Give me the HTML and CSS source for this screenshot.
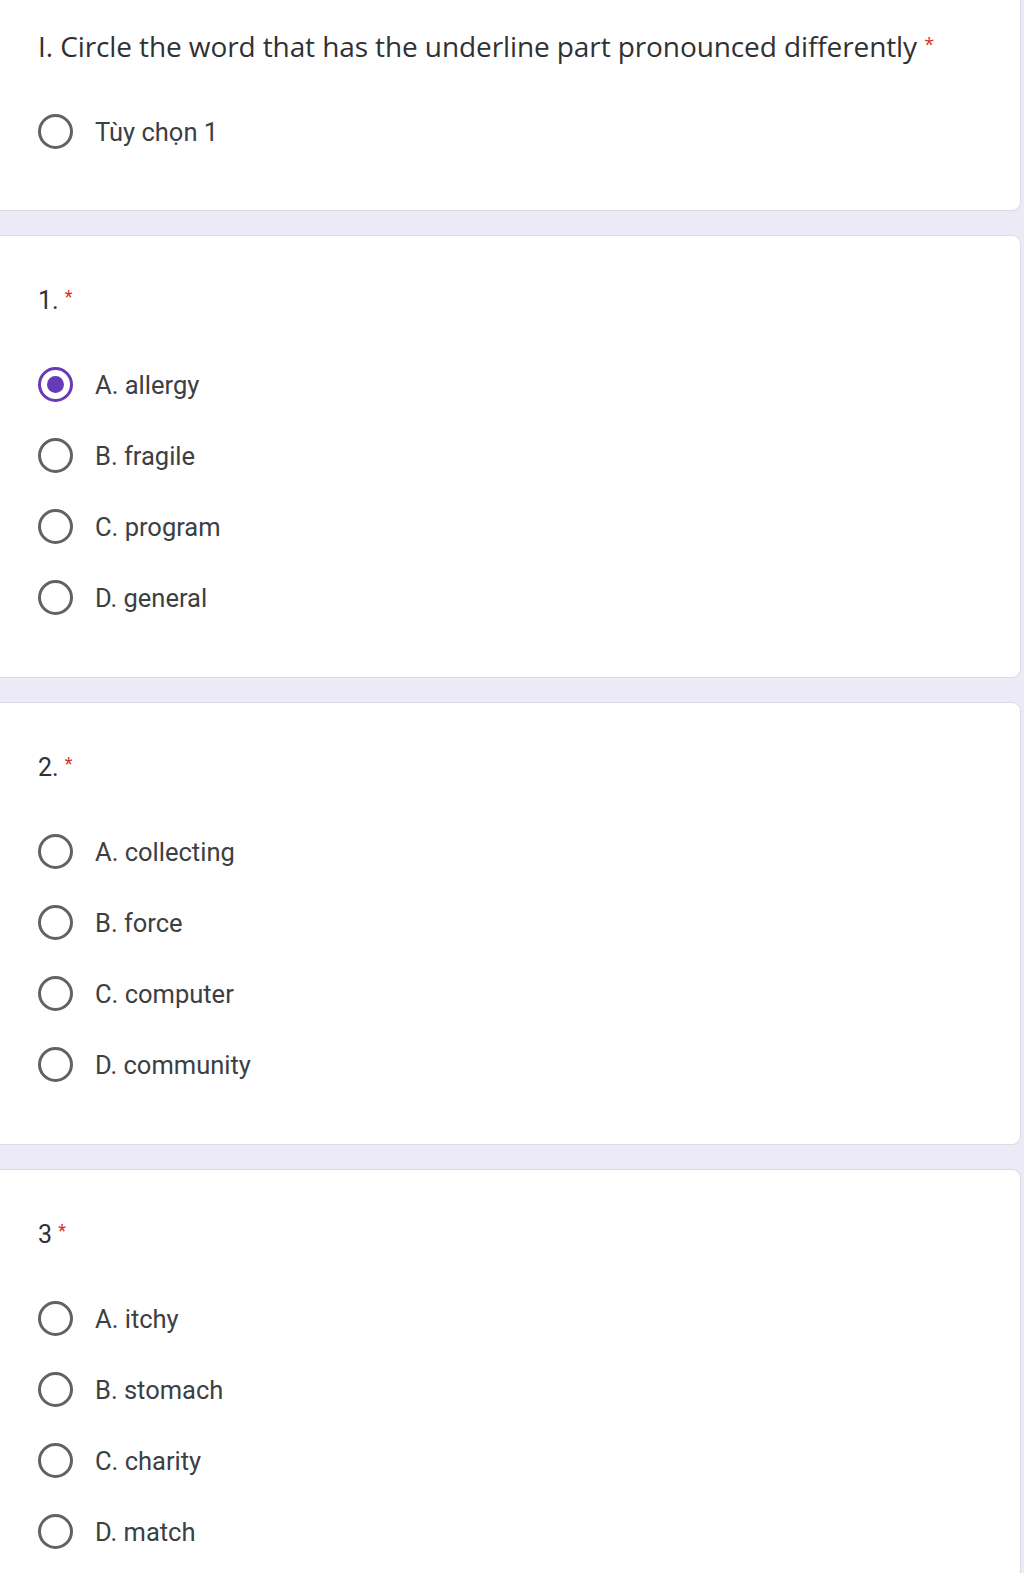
FILE: index.html
```html
<!DOCTYPE html>
<html>
<head>
<meta charset="utf-8">
<link rel="stylesheet" href="styles.css">
</head>
<body>
<div class="page">
  <section class="card card-first">
    <div class="title">I. Circle the word that has the underline part pronounced differently <span class="req">*</span></div>
    <div class="options">
      <div class="opt"><span class="radio"></span><span class="label">Tùy chọn 1</span></div>
    </div>
  </section>
  <section class="card">
    <div class="qlabel">1. <span class="req">*</span></div>
    <div class="options">
      <div class="opt"><span class="radio checked"></span><span class="label">A. allergy</span></div>
      <div class="opt"><span class="radio"></span><span class="label">B. fragile</span></div>
      <div class="opt"><span class="radio"></span><span class="label">C. program</span></div>
      <div class="opt"><span class="radio"></span><span class="label">D. general</span></div>
    </div>
  </section>
  <section class="card">
    <div class="qlabel">2. <span class="req">*</span></div>
    <div class="options">
      <div class="opt"><span class="radio"></span><span class="label">A. collecting</span></div>
      <div class="opt"><span class="radio"></span><span class="label">B. force</span></div>
      <div class="opt"><span class="radio"></span><span class="label">C. computer</span></div>
      <div class="opt"><span class="radio"></span><span class="label">D. community</span></div>
    </div>
  </section>
  <section class="card card-last">
    <div class="qlabel">3 <span class="req">*</span></div>
    <div class="options">
      <div class="opt"><span class="radio"></span><span class="label">A. itchy</span></div>
      <div class="opt"><span class="radio"></span><span class="label">B. stomach</span></div>
      <div class="opt"><span class="radio"></span><span class="label">C. charity</span></div>
      <div class="opt"><span class="radio"></span><span class="label">D. match</span></div>
    </div>
  </section>
</div>
</body>
</html>
```
FILE: styles.css
```css
html, body {
  margin: 0;
  padding: 0;
  background: #edeaf7;
}
.page {
  width: 1021px;
  display: flex;
  flex-direction: column;
  gap: 24px;
  font-family: Roboto, "Noto Sans", sans-serif;
  color: #202124;
}
.card {
  background: #fff;
  border: 1px solid #dcdae3;
  border-left: none;
  border-radius: 0 9px 9px 0;
  padding: 43px 0 44px 38px;
  box-sizing: border-box;
  height: 443px;
}
.card-first {
  border-top: none;
  border-radius: 0 0 9px 0;
  padding-top: 25px;
  height: 211px;
}
.card-last {
  border-bottom: none;
  height: 410px;
}
.title {
  font-family: "Open Sans", Roboto, sans-serif;
  font-size: 28px;
  line-height: 38px;
  letter-spacing: -0.1px;
  color: #303134;
  white-space: nowrap;
}
.qlabel {
  font-size: 25px;
  line-height: 36px;
  color: #303134;
}
.req {
  color: #d93025;
  font-size: 18px;
  vertical-align: 6px;
}
.options {
  margin-top: 30px;
  display: flex;
  flex-direction: column;
}
.card-first .options {
  margin-top: 31px;
}
.opt {
  height: 71px;
  display: flex;
  align-items: center;
}
.radio {
  width: 35px;
  height: 35px;
  box-sizing: border-box;
  border: 3.5px solid #5f6368;
  border-radius: 50%;
  flex: none;
  position: relative;
}
.radio.checked {
  border-color: #673ab7;
}
.radio.checked::after {
  content: "";
  position: absolute;
  left: 50%;
  top: 50%;
  width: 17px;
  height: 17px;
  margin: -8.5px 0 0 -8.5px;
  border-radius: 50%;
  background: #673ab7;
}
.label {
  margin-left: 22px;
  font-size: 25.5px;
  color: #3c4043;
}
```
